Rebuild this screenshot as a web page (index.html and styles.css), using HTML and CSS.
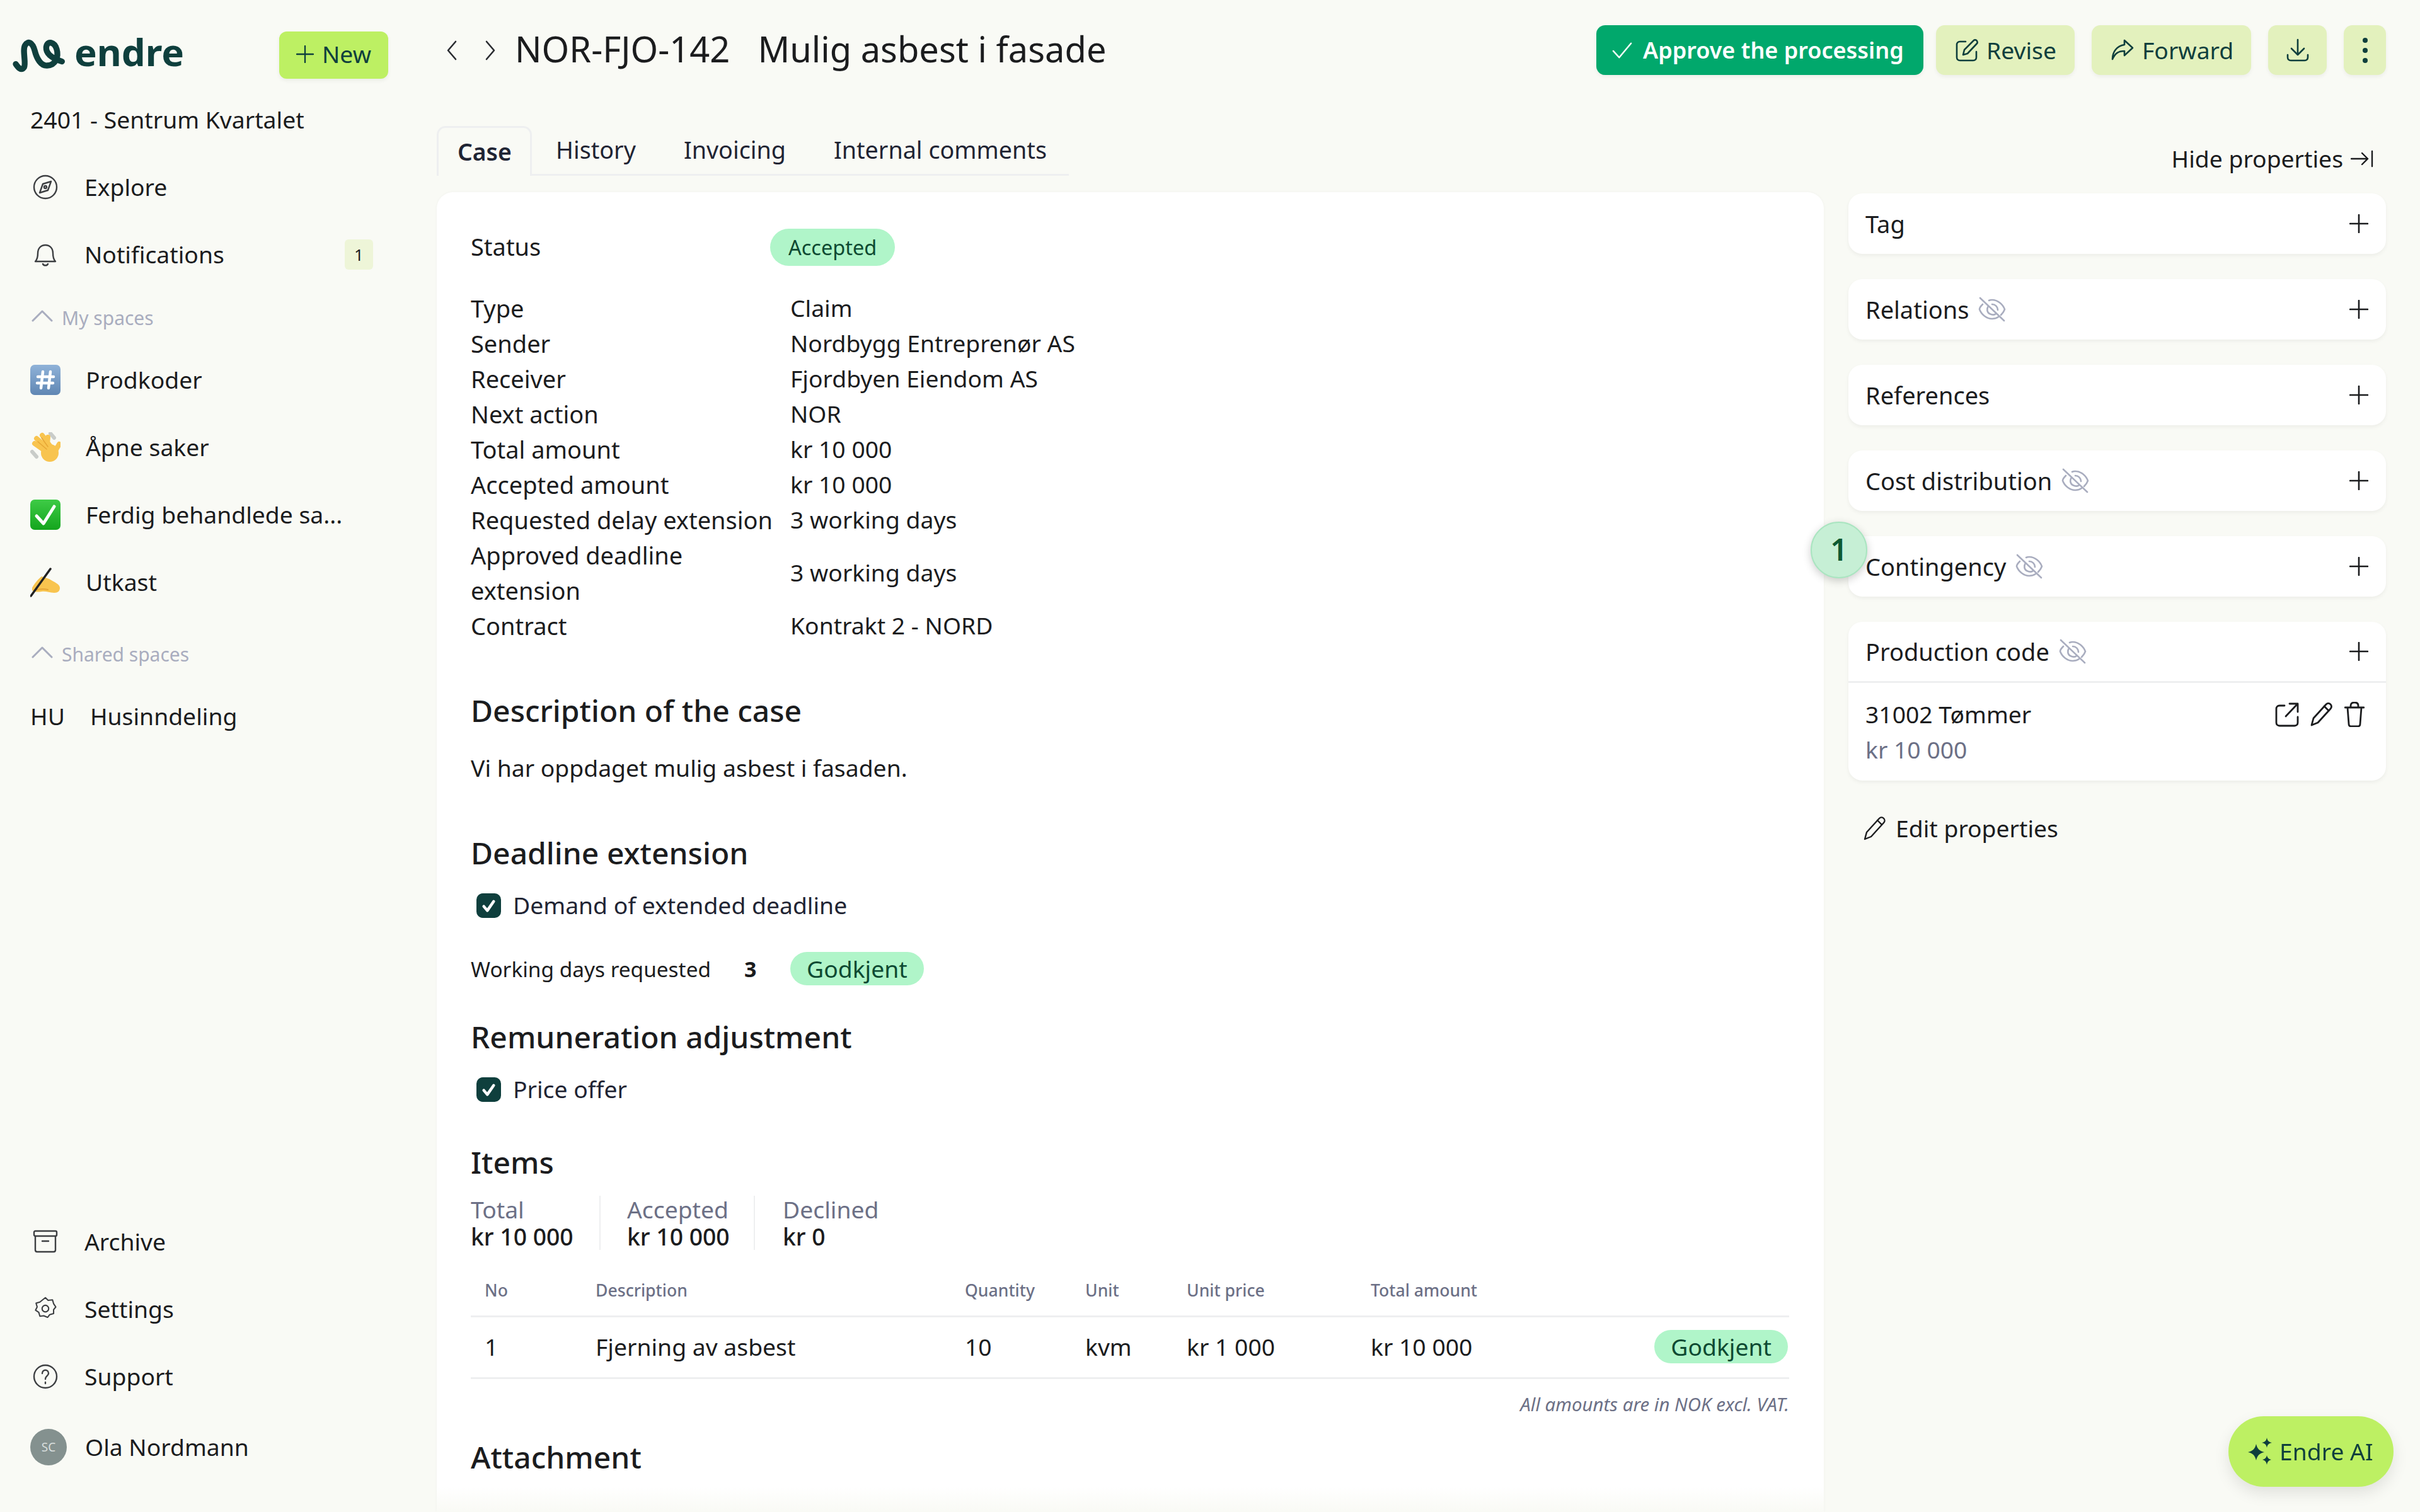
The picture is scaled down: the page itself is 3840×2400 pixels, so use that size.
FILE: index.html
```html
<!DOCTYPE html>
<html lang="en">
<head>
  <meta charset="UTF-8" />
  <title>NOR-FJO-142 Mulig asbest i fasade</title>
  <link rel="stylesheet" href="styles.css">
</head>
<body>

  <svg class="icon-defs" width="0" height="0">
    <defs>
      <linearGradient id="g-blue" x1="0" y1="0" x2="0" y2="1"><stop offset="0" stop-color="#8fb2d8" /><stop offset="1" stop-color="#5f86b3" /></linearGradient>
      <linearGradient id="g-green" x1="0" y1="0" x2="0" y2="1"><stop offset="0" stop-color="#3ecb46" /><stop offset="1" stop-color="#14a51d" /></linearGradient>
    </defs>
    <symbol id="i-plus" viewBox="0 0 30 30"><path d="M15 1v28M1 15h28" /></symbol>
    <symbol id="i-eye-off" viewBox="0 0 46 40">
      <path d="M4 2l38 36" />
      <path d="M8 12c-3 3-5 6-5 8 3 8 11 15 20 15 4 0 7-1 10-3M18 6c2-1 4-1 5-1 9 0 17 7 20 15-1 3-3 6-6 9" />
      <path d="M17 15c-3 4-2 10 2 12s8 2 10 0M23 12c5 0 9 4 9 9" />
    </symbol>
    <symbol id="i-pen" viewBox="0 0 38 40">
      <path d="M3 37l3-11L26 4c2-2 5-2 7 0s2 5 0 7L13 33z" />
      <path d="M23 7l7 7" />
    </symbol>
  </svg>

  <div class="app">
    <aside class="sidebar">
      <div class="brand-row">
        <a class="logo">
          <svg class="logo-mark" viewBox="0 0 330 225"><path d="M45 155C55 170 70 190 85 170C95 150 75 85 90 65C105 40 125 55 135 90C145 130 165 165 195 162C235 160 250 120 240 85C230 50 195 40 190 75C188 110 225 130 265 143" /></svg>
          <span class="logo-text">endre</span>
        </a>
        <button class="new-btn"><svg class="new-plus"><use href="#i-plus" /></svg>New</button>
      </div>
      <div class="project">2401 - Sentrum Kvartalet</div>

      <a class="nav-item">
        <svg class="nav-icon" viewBox="0 0 40 40"><circle cx="20" cy="20" r="18" /><path d="M29 11l-13 4-5 14 13-4z" /><circle cx="20" cy="20" r="2" /></svg>
        Explore
      </a>
      <a class="nav-item">
        <svg class="nav-icon" viewBox="0 0 40 40"><path d="M4 31c3-3 4-6 4-13 0-8 5-13 12-13s12 5 12 13c0 7 1 10 4 13z" /><path d="M16 35c1 3 7 3 8 0" /></svg>
        Notifications
        <span class="count">1</span>
      </a>

      <div class="section-title"><svg class="chevron" viewBox="0 0 34 20"><path d="M2 18L17 3l15 15" /></svg>My spaces</div>
      <a class="nav-item">
        <svg class="emoji" viewBox="0 0 48 48">
          <rect width="48" height="48" rx="7" fill="url(#g-blue)" />
          <path d="M20 11l-3 26M32 11l-3 26M12 19h25M11 29h25" fill="none" stroke="#fff" stroke-width="4.5" />
        </svg>
        Prodkoder
      </a>
      <a class="nav-item">
        <svg class="emoji" viewBox="0 0 48 48">
          <path d="M32 2l6 7M3 31l7 8" stroke="#c9ccc9" stroke-width="6" fill="none" />
          <path d="M27 32L7 18M30 27L10 10M33 24L19 5M26 28L28 8M36 36l10-17" stroke="#f8c44f" stroke-width="8" stroke-linecap="round" fill="none" />
          <circle cx="31" cy="33" r="14" fill="#f8c44f" />
          <path d="M12 15l14 12M18 9l10 14" stroke="#e6a635" stroke-width="1.5" fill="none" />
        </svg>
        Åpne saker
      </a>
      <a class="nav-item">
        <svg class="emoji" viewBox="0 0 48 48">
          <rect width="48" height="48" rx="7" fill="url(#g-green)" />
          <path d="M10 26l11 12 17-27" fill="none" stroke="#fff" stroke-width="5" />
        </svg>
        Ferdig behandlede sa...
      </a>
      <a class="nav-item">
        <svg class="emoji" viewBox="0 0 48 48">
          <path d="M3 33C8 24 13 19 18 15L30 19C38 24 47 27 47 33C47 38 44 41 38 41C30 41 25 38 18 39C12 40 6 40 3 37z" fill="#f8c44f" />
          <path d="M6 37c8-2 14-3 22-1" stroke="#e6a635" stroke-width="2" fill="none" />
          <path d="M1 46L32 3" stroke="#222" stroke-width="3.5" stroke-linecap="round" fill="none" />
        </svg>
        Utkast
      </a>

      <div class="section-title section-shared"><svg class="chevron" viewBox="0 0 34 20"><path d="M2 18L17 3l15 15" /></svg>Shared spaces</div>
      <a class="nav-item nav-shared"><span class="space-code">HU</span>Husinndeling</a>

      <div class="sidebar-bottom">
        <a class="nav-item">
          <svg class="nav-icon" viewBox="0 0 40 40"><rect x="2" y="3" width="36" height="8" rx="2" /><path d="M4 11v22c0 2 1 3 3 3h26c2 0 3-1 3-3V11M15 19h10" /></svg>
          Archive
        </a>
        <a class="nav-item">
          <svg class="nav-icon" viewBox="0 0 40 46"><path d="M20 2l5 5 8-1 2 7 4 6-4 5 0 7-7 2-4 5-7-3-7 1-2-7-6-4 3-6-2-7 7-2z" /><circle cx="20" cy="22" r="6" /></svg>
          Settings
        </a>
        <a class="nav-item">
          <svg class="nav-icon" viewBox="0 0 40 40"><circle cx="20" cy="20" r="18" /><path d="M15 15c0-7 10-7 10 0 0 4-5 4-5 9" /><path d="M20 29v2" /></svg>
          Support
        </a>
        <a class="nav-item nav-user">
          <span class="avatar">SC</span>
          Ola Nordmann
        </a>
      </div>
    </aside>

    <main class="main">
      <header class="topbar">
        <div class="pager">
          <svg class="pager-icon" viewBox="0 0 16 32"><path d="M14 2L2 16l12 14" /></svg>
          <svg class="pager-icon" viewBox="0 0 16 32"><path d="M2 2l12 14L2 30" /></svg>
        </div>
        <h1 class="case-title"><span>NOR-FJO-142</span><span>Mulig asbest i fasade</span></h1>
        <div class="actions">
          <button class="btn btn-approve">
            <svg class="btn-icon" viewBox="0 0 34 34"><path d="M2 18l10 11L32 5" /></svg>
            Approve the processing
          </button>
          <button class="btn btn-revise">
            <svg class="btn-icon" viewBox="0 0 38 38"><path d="M34 21v9c0 3-2 5-5 5H8c-3 0-5-2-5-5V10c0-3 2-5 5-5h9" /><path d="M13 26l2-8L30 3c1-1 4-1 5 1s1 3 0 4L20 24z" /></svg>
            Revise
          </button>
          <button class="btn btn-forward">
            <svg class="btn-icon" viewBox="0 0 38 38"><path d="M22 3l13 12-13 12v-7C12 20 7 24 3 33c0-12 7-21 19-23z" /></svg>
            Forward
          </button>
          <button class="btn btn-square">
            <svg class="btn-icon" viewBox="0 0 38 38"><path d="M19 2v24M9 16l10 10 10-10M3 26v4c0 3 2 5 5 5h22c3 0 5-2 5-5v-4" /></svg>
          </button>
          <button class="btn btn-dots"><span></span><span></span><span></span></button>
        </div>
      </header>

      <div class="content">
        <section class="case-col">
          <nav class="tabs">
            <a class="tab active">Case</a>
            <a class="tab">History</a>
            <a class="tab">Invoicing</a>
            <a class="tab">Internal comments</a>
          </nav>

          <article class="card">
            <div class="status-row">
              <span class="status-label">Status</span>
              <span class="pill pill-status">Accepted</span>
            </div>

            <dl class="facts">
              <dt>Type</dt><dd>Claim</dd>
              <dt>Sender</dt><dd>Nordbygg Entreprenør AS</dd>
              <dt>Receiver</dt><dd>Fjordbyen Eiendom AS</dd>
              <dt>Next action</dt><dd>NOR</dd>
              <dt>Total amount</dt><dd>kr 10 000</dd>
              <dt>Accepted amount</dt><dd>kr 10 000</dd>
              <dt>Requested delay extension</dt><dd>3 working days</dd>
              <dt>Approved deadline extension</dt><dd>3 working days</dd>
              <dt>Contract</dt><dd>Kontrakt 2 - NORD</dd>
            </dl>

            <h2 class="heading">Description of the case</h2>
            <p class="description">Vi har oppdaget mulig asbest i fasaden.</p>

            <h2 class="heading">Deadline extension</h2>
            <div class="check-row"><span class="checkbox"><svg viewBox="0 0 24 24"><path d="M5 13l5 6 9-13" /></svg></span>Demand of extended deadline</div>
            <div class="days-row">
              <span class="days-label">Working days requested</span>
              <strong class="days-value">3</strong>
              <span class="pill">Godkjent</span>
            </div>

            <h2 class="heading heading-adjust">Remuneration adjustment</h2>
            <div class="check-row"><span class="checkbox"><svg viewBox="0 0 24 24"><path d="M5 13l5 6 9-13" /></svg></span>Price offer</div>

            <h2 class="heading heading-items">Items</h2>
            <div class="totals">
              <div class="total total-first"><span>Total</span><b>kr 10 000</b></div>
              <div class="total"><span>Accepted</span><b>kr 10 000</b></div>
              <div class="total total-last"><span>Declined</span><b>kr 0</b></div>
            </div>

            <table class="items">
              <colgroup>
                <col class="c-no"><col class="c-desc"><col class="c-qty"><col class="c-unit"><col class="c-price"><col class="c-total"><col>
              </colgroup>
              <thead>
                <tr><th>No</th><th>Description</th><th>Quantity</th><th>Unit</th><th>Unit price</th><th>Total amount</th><th></th></tr>
              </thead>
              <tbody>
                <tr><td>1</td><td>Fjerning av asbest</td><td>10</td><td>kvm</td><td>kr 1 000</td><td>kr 10 000</td><td class="cell-status"><span class="pill">Godkjent</span></td></tr>
              </tbody>
            </table>
            <p class="note">All amounts are in NOK excl. VAT.</p>

            <h2 class="heading heading-attach">Attachment</h2>
            <div class="card-fade"></div>
          </article>
        </section>

        <aside class="props">
          <div class="props-toggle">
            Hide properties
            <svg class="hide-icon" viewBox="0 0 36 28"><path d="M1 14h26M18 5l9 9-9 9M34 2v24" /></svg>
          </div>

          <div class="prop"><div class="prop-head"><span class="prop-name">Tag</span><svg class="plus"><use href="#i-plus" /></svg></div></div>
          <div class="prop"><div class="prop-head"><span class="prop-name">Relations</span><svg class="eye-off"><use href="#i-eye-off" /></svg><svg class="plus"><use href="#i-plus" /></svg></div></div>
          <div class="prop"><div class="prop-head"><span class="prop-name">References</span><svg class="plus"><use href="#i-plus" /></svg></div></div>
          <div class="prop"><div class="prop-head"><span class="prop-name">Cost distribution</span><svg class="eye-off"><use href="#i-eye-off" /></svg><svg class="plus"><use href="#i-plus" /></svg></div></div>
          <div class="prop prop-marked">
            <span class="marker">1</span>
            <div class="prop-head"><span class="prop-name">Contingency</span><svg class="eye-off"><use href="#i-eye-off" /></svg><svg class="plus"><use href="#i-plus" /></svg></div>
          </div>
          <div class="prop">
            <div class="prop-head prop-head-line"><span class="prop-name">Production code</span><svg class="eye-off"><use href="#i-eye-off" /></svg><svg class="plus"><use href="#i-plus" /></svg></div>
            <div class="prop-body">
              <div class="prop-value">
                <span>31002 Tømmer</span>
                <div class="prop-tools">
                  <svg class="tool" viewBox="0 0 38 40"><path d="M15 6H7c-3 0-5 2-5 5v22c0 3 2 5 5 5h24c3 0 5-2 5-5v-9" /><path d="M17 23L34 5M23 3h13v13" /></svg>
                  <svg class="tool"><use href="#i-pen" /></svg>
                  <svg class="tool tool-trash" viewBox="0 0 32 40"><path d="M1 9h30M5 9l2 26c0 2 1 4 4 4h10c3 0 4-2 4-4l2-26M10 9V6c0-3 2-5 6-5s6 2 6 5v3" /></svg>
                </div>
              </div>
              <div class="prop-amount">kr 10 000</div>
            </div>
          </div>
          <a class="edit-props"><svg class="edit-icon"><use href="#i-pen" /></svg>Edit properties</a>
        </aside>
      </div>
    </main>
  </div>

  <button class="ai-btn">
    <svg class="ai-icon" viewBox="0 0 38 44"><path d="M13 10c2 8 5 11 13 13-8 2-11 5-13 13-2-8-5-11-13-13 8-2 11-5 13-13zM30 0c1 5 3 7 8 8-5 1-7 3-8 8-1-5-3-7-8-8 5-1 7-3 8-8zM30 28c1 4 3 6 7 7-4 1-6 3-7 8-1-5-3-7-7-8 4-1 6-3 7-7z" /></svg>
    Endre AI
  </button>

</body>
</html>
```

FILE: styles.css
```css
:root {
  --bg: #f9faf5;
  --ink: #1b1c1e;
  --navy: #1f2433;
  --pine: #0f3f3d;
  --muted: #6c7086;
  --faint: #a9adbf;
  --lime: #bdf063;
  --lime-soft: #e3f1bd;
  --mint: #b0f5c9;
  --line: #eeeff0;
}

* {
  box-sizing: border-box;
}

body {
  margin: 0;
  height: 2400px;
  overflow: hidden;
  background: var(--bg);
  color: var(--ink);
  font-family: "Noto Sans", sans-serif;
  font-size: 37.3px;
  line-height: 56px;
}

button {
  font: inherit;
  border: none;
  cursor: pointer;
}

svg {
  fill: none;
  stroke: currentColor;
  stroke-linecap: round;
  stroke-linejoin: round;
  flex: none;
}

.icon-defs {
  position: absolute;
}

.app {
  display: grid;
  grid-template-columns: 693px 1fr;
  height: 2400px;
}

/* Sidebar */
.sidebar {
  display: flex;
  flex-direction: column;
  padding: 50px 101px 50px 48px;
}

.brand-row {
  display: flex;
  justify-content: space-between;
  align-items: center;
  margin: 0 -24px 0 -38px;
  height: 75px;
}

.logo {
  display: flex;
  align-items: center;
  gap: 0;
}

.logo-mark {
  width: 110px;
  height: 75px;
  stroke: var(--pine);
  stroke-width: 28;
}

.logo-text {
  font-size: 60px;
  font-weight: 700;
  color: var(--pine);
  line-height: 75px;
  margin: -10px 0 0 -2px;
}

.new-btn {
  display: flex;
  align-items: center;
  gap: 13px;
  width: 173px;
  height: 75px;
  padding: 0 0 3px 27px;
  border-radius: 12px;
  background: var(--lime);
  color: var(--pine);
  box-shadow: 0 3px 6px rgba(0, 0, 0, 0.06);
}

.new-plus {
  width: 28px;
  height: 28px;
  stroke-width: 2.5;
}

.project {
  margin-top: 37px;
  line-height: 56px;
  height: 81px;
}

.nav-item {
  display: flex;
  align-items: center;
  height: 107px;
}

.nav-icon {
  width: 40px;
  height: 40px;
  margin: 0 42px 0 4px;
  stroke: #3d3f42;
  stroke-width: 2.4;
}

.count {
  margin-left: auto;
  width: 45px;
  height: 48px;
  border-radius: 6px;
  background: #eef5d8;
  font-size: 26px;
  line-height: 48px;
  text-align: center;
}

.section-title {
  display: flex;
  align-items: center;
  height: 92px;
  padding-top: 3px;
  font-size: 30px;
  color: var(--faint);
}

.section-shared {
  margin-top: 14px;
}

.chevron {
  width: 34px;
  height: 20px;
  margin: -8px 14px 0 2px;
  stroke-width: 3;
}

.emoji {
  width: 48px;
  height: 48px;
  margin-right: 40px;
  stroke: none;
}

.space-code {
  margin-right: 40px;
}

.sidebar-bottom {
  margin-top: auto;
}

.nav-user {
  margin-top: 5px;
}

.avatar {
  width: 58px;
  height: 58px;
  margin-right: 29px;
  border-radius: 50%;
  background: #84918f;
  color: #d8dedd;
  font-size: 19px;
  line-height: 58px;
  text-align: center;
}

/* Top bar */
.main {
  display: flex;
  flex-direction: column;
  padding: 40px 54px 0 0;
  min-width: 0;
}

.topbar {
  display: flex;
  align-items: center;
  height: 79px;
}

.pager {
  display: flex;
  gap: 45px;
  margin-left: 16px;
  color: #2a2c30;
}

.pager-icon {
  width: 16px;
  height: 32px;
  stroke-width: 2.6;
}

.case-title {
  display: flex;
  gap: 44px;
  margin: -4px 0 0 31px;
  font-size: 56px;
  font-weight: 400;
  line-height: 79px;
}

.actions {
  display: flex;
  gap: 27px;
  margin-left: auto;
}

.btn {
  display: flex;
  align-items: center;
  gap: 12px;
  height: 79px;
  padding: 0 30px;
  border-radius: 14px;
  background: var(--lime-soft);
  color: var(--pine);
  box-shadow: 0 3px 6px rgba(0, 0, 0, 0.05);
}

.btn-icon {
  width: 38px;
  height: 38px;
  stroke-width: 2.6;
}

.btn-approve {
  width: 519px;
  margin-right: -7px;
  padding: 0 0 0 25px;
  gap: 17px;
  background: #01a86c;
  color: #fff;
  font-size: 36px;
  font-weight: 600;
}

.btn-approve .btn-icon {
  width: 32px;
  height: 32px;
}

.btn-revise {
  width: 220px;
}

.btn-forward {
  width: 253px;
}

.btn-square {
  width: 93px;
  padding: 0;
  justify-content: center;
}

.btn-dots {
  flex-direction: column;
  justify-content: center;
  gap: 8px;
  width: 67px;
  padding: 0;
}

.btn-dots span {
  width: 8px;
  height: 8px;
  border-radius: 50%;
  background: var(--pine);
}

/* Case column */
.content {
  display: grid;
  grid-template-columns: 2201px 853px;
  gap: 39px;
  margin-top: 81px;
  min-height: 0;
  flex: 1;
}

.case-col {
  display: flex;
  flex-direction: column;
  min-height: 0;
}

.tabs {
  display: flex;
  height: 79px;
  width: 1003px;
  border-bottom: 3px solid var(--line);
  color: var(--navy);
  font-size: 37.7px;
  white-space: nowrap;
}

.tab {
  display: flex;
  align-items: center;
  height: 76px;
  padding: 0 38px;
}

.tab.active {
  width: 151px;
  height: 79px;
  padding: 0 30px;
  margin-right: 0;
  border: 3px solid var(--line);
  border-bottom: none;
  border-radius: 14px 14px 0 0;
  background: var(--bg);
  font-size: 37.3px;
  font-weight: 600;
}

.card {
  position: relative;
  flex: 1;
  margin-top: 26px;
  padding: 58px 55px 0 54px;
  overflow: hidden;
  border-radius: 26px 26px 0 0;
  background: #fff;
  box-shadow: 0 0 4px rgba(0, 0, 0, 0.04);
}

.card-fade {
  position: absolute;
  left: 0;
  right: 0;
  bottom: 0;
  height: 40px;
  background: linear-gradient(to bottom, rgba(249, 250, 245, 0), var(--bg));
}

.status-row {
  display: flex;
  align-items: center;
}

.status-label {
  width: 475px;
  margin-top: -3px;
  font-size: 38px;
}

.pill {
  display: inline-block;
  height: 53px;
  padding: 0 26px;
  border-radius: 27px;
  background: var(--mint);
  color: #0e4a32;
  line-height: 53px;
}

.pill-status {
  height: 59px;
  padding: 0 29px;
  border-radius: 30px;
  font-size: 32.5px;
  line-height: 59px;
}

.facts {
  display: grid;
  grid-template-columns: 507px 1fr;
  align-items: center;
  margin: 39px 0 1px;
}

.facts dt {
  padding-right: 20px;
  font-size: 38px;
}

.facts dd {
  margin: 0;
}

.heading {
  margin: 75px 0 0;
  font-size: 48px;
  font-weight: 500;
  line-height: 64px;
}

.description {
  margin: 31px 0 0;
}

.check-row {
  display: flex;
  align-items: center;
  margin-top: 23px;
  padding-left: 9px;
  color: var(--navy);
}

.checkbox {
  display: flex;
  align-items: center;
  justify-content: center;
  width: 39px;
  height: 39px;
  margin-right: 19px;
  border-radius: 10px;
  background: var(--pine);
}

.checkbox svg {
  width: 27px;
  height: 27px;
  stroke: #fff;
  stroke-width: 4;
}

.days-row {
  display: flex;
  align-items: center;
  margin-top: 46px;
  height: 53px;
}

.days-label {
  width: 434px;
  font-size: 33.4px;
}

.days-value {
  width: 73px;
  font-size: 34px;
}

.heading-adjust {
  margin-top: 50px;
}

.heading-items {
  margin-top: 56px;
}

.totals {
  display: flex;
  margin-top: 21px;
}

.total {
  display: flex;
  flex-direction: column;
  width: 245px;
  padding-left: 42px;
  border-right: 2px solid var(--line);
  line-height: 43px;
}

.total-first {
  width: 206px;
  padding-left: 0;
}

.total-last {
  border-right: none;
  padding-left: 44px;
}

.total span {
  color: var(--muted);
}

.total b {
  font-weight: 500;
}

.items {
  width: 2092px;
  margin-top: 25px;
  border-collapse: collapse;
  table-layout: fixed;
}

.c-no { width: 198px; }
.c-desc { width: 586px; }
.c-qty { width: 191px; }
.c-unit { width: 161px; }
.c-price { width: 292px; }
.c-total { width: 450px; }

.items th {
  height: 80px;
  padding: 0;
  text-align: left;
  font-size: 26.6px;
  font-weight: 500;
  color: var(--muted);
  border-bottom: 3px solid var(--line);
}

.items td {
  height: 98px;
  padding: 0;
  border-bottom: 3px solid var(--line);
}

.items th:first-child,
.items td:first-child {
  padding-left: 22px;
}

.items .cell-status {
  padding-right: 2px;
  text-align: right;
}

.note {
  margin: 20px 0 0;
  font-size: 29.4px;
  font-style: italic;
  line-height: 40px;
  text-align: right;
  color: var(--muted);
}

.heading-attach {
  margin-top: 32px;
}

/* Properties */
.props {
  display: flex;
  flex-direction: column;
  gap: 40px;
}

.props-toggle {
  display: flex;
  align-items: center;
  justify-content: flex-end;
  gap: 12px;
  height: 103px;
  margin-bottom: -36px;
  padding-right: 20px;
}

.hide-icon {
  width: 36px;
  height: 28px;
  stroke-width: 2.4;
}

.prop {
  position: relative;
  border-radius: 22px;
  background: #fff;
  box-shadow: 0 3px 6px rgba(0, 0, 0, 0.05);
}

.prop-head {
  display: flex;
  align-items: center;
  height: 96px;
  padding: 0 28px 0 27px;
}

.prop-name {
  font-size: 38px;
}

.prop-head-line {
  height: 97px;
  border-bottom: 3px solid var(--line);
}

.eye-off {
  width: 46px;
  height: 40px;
  margin-left: 14px;
  stroke: var(--faint);
  stroke-width: 2.6;
}

.plus {
  width: 30px;
  height: 30px;
  margin-left: auto;
  stroke-width: 2.6;
}

.prop-body {
  padding: 22px 34px 21px 27px;
}

.prop-value {
  display: flex;
  align-items: center;
  justify-content: space-between;
}

.prop-tools {
  display: flex;
  gap: 17px;
}

.tool {
  width: 38px;
  height: 40px;
  stroke-width: 2.8;
}

.tool-trash {
  width: 32px;
}

.prop-amount {
  color: var(--muted);
}

.edit-props {
  display: flex;
  align-items: center;
  gap: 14px;
  margin-top: 8px;
  margin-left: 23px;
}

.edit-icon {
  width: 38px;
  height: 40px;
  stroke-width: 2.4;
}

.marker {
  position: absolute;
  left: -60px;
  top: -23px;
  width: 90px;
  height: 90px;
  border: 2px solid #a9e5c0;
  border-radius: 50%;
  background: #c6efd5;
  color: #0d5a32;
  font-size: 48px;
  font-weight: 600;
  line-height: 84px;
  text-align: center;
  box-shadow: 0 4px 14px rgba(0, 0, 0, 0.2);
}

.ai-btn {
  position: fixed;
  left: 3536px;
  top: 2248px;
  display: flex;
  align-items: center;
  gap: 12px;
  width: 262px;
  height: 112px;
  padding-left: 31px;
  border-radius: 56px;
  background: var(--lime);
  color: var(--pine);
  box-shadow: 0 10px 24px rgba(0, 0, 0, 0.1);
}

.ai-icon {
  width: 38px;
  height: 44px;
  fill: var(--pine);
  stroke: none;
}
```
